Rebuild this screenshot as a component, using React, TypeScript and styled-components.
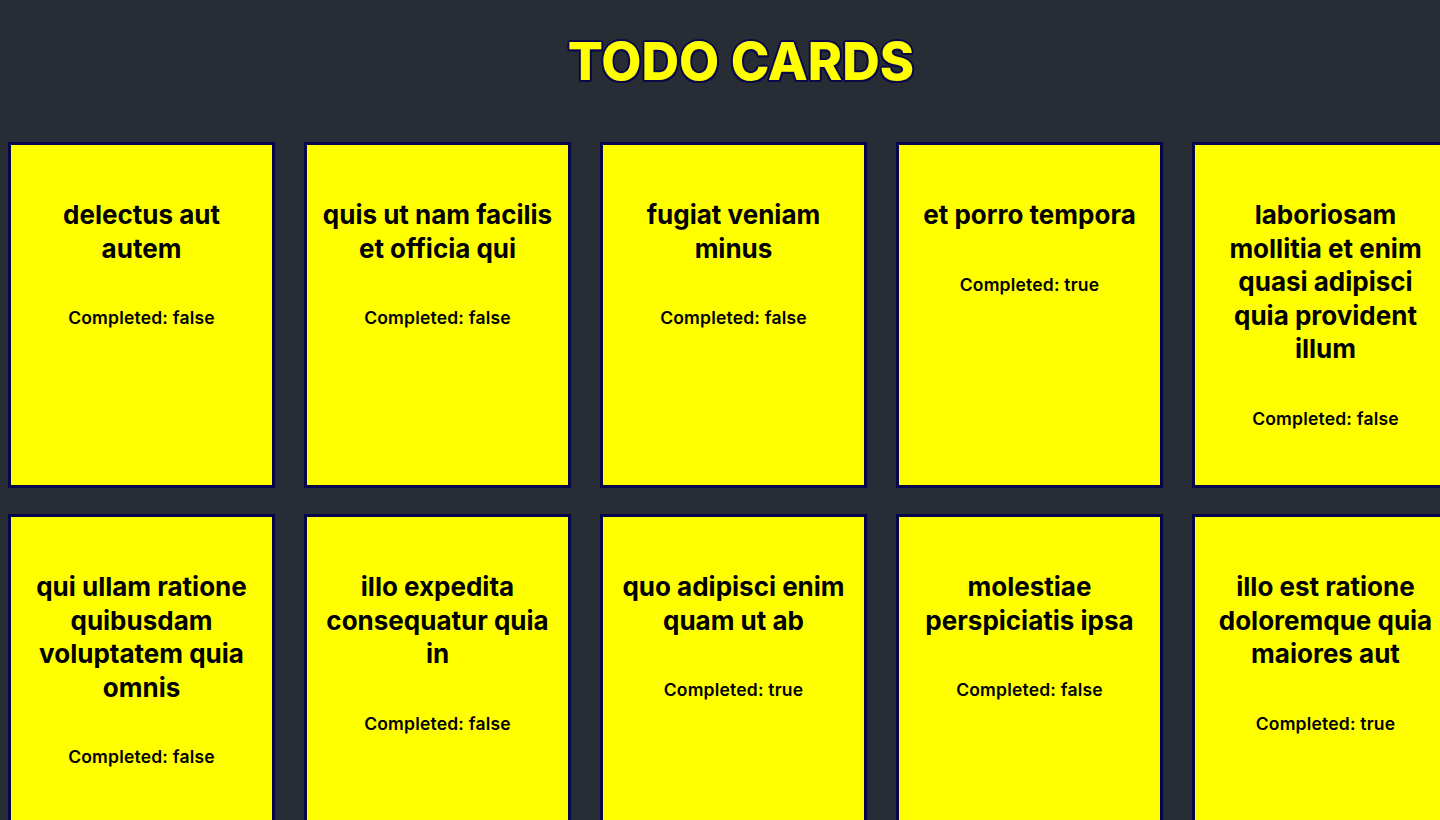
import React from "react";
import styled, { createGlobalStyle } from "styled-components";

const GlobalStyle = createGlobalStyle`
  html, body {
    margin: 0;
    padding: 0;
    background: #282c34;
    overflow-x: hidden;
  }
  body {
    margin: 0;
    padding: 0 8px;
    font-family: Inter, "Noto Sans", sans-serif;
  }
`;

const Page = styled.div`
  width: 1466px;
  display: flex;
  flex-direction: column;
  align-items: stretch;
`;

const Title = styled.h1`
  margin: 30px 0 49px;
  text-align: center;
  font-family: Inter, sans-serif;
  font-weight: 800;
  font-size: 52px;
  line-height: 63px;
  color: #ffff00;
  text-shadow: 2px 0 0 #0a0a4a, -2px 0 0 #0a0a4a, 0 2px 0 #0a0a4a, 0 -2px 0 #0a0a4a,
    1.5px 1.5px 0 #0a0a4a, -1.5px -1.5px 0 #0a0a4a, 1.5px -1.5px 0 #0a0a4a, -1.5px 1.5px 0 #0a0a4a;
`;

const Grid = styled.div`
  display: grid;
  grid-template-columns: repeat(5, 267px);
  column-gap: 29px;
  row-gap: 26px;
`;

const Card = styled.div`
  box-sizing: border-box;
  height: 346px;
  background: #ffff00;
  border: 3px solid #06064a;
  display: flex;
  flex-direction: column;
  align-items: center;
  padding: 53px 15px 0;
  text-align: center;
  color: #000;
`;

const CardTitle = styled.h2`
  margin: 0;
  font-family: Inter, sans-serif;
  font-weight: 700;
  font-size: 26px;
  line-height: 33.5px;
`;

const Status = styled.p`
  margin: 42px 0 0;
  font-family: Inter, sans-serif;
  font-weight: 600;
  font-size: 17.5px;
  line-height: 22px;
  letter-spacing: 0.2px;
`;

const todos = [
  { id: 1, title: "delectus aut autem", completed: false },
  { id: 2, title: "quis ut nam facilis et officia qui", completed: false },
  { id: 3, title: "fugiat veniam minus", completed: false },
  { id: 4, title: "et porro tempora", completed: true },
  { id: 5, title: "laboriosam mollitia et enim quasi adipisci quia provident illum", completed: false },
  { id: 6, title: "qui ullam ratione quibusdam voluptatem quia omnis", completed: false },
  { id: 7, title: "illo expedita consequatur quia in", completed: false },
  { id: 8, title: "quo adipisci enim quam ut ab", completed: true },
  { id: 9, title: "molestiae perspiciatis ipsa", completed: false },
  { id: 10, title: "illo est ratione doloremque quia maiores aut", completed: true },
];

export default function App() {
  return (
    <>
      <GlobalStyle />
      <Page>
        <Title>TODO CARDS</Title>
        <Grid>
          {todos.map((t) => (
            <Card key={t.id}>
              <CardTitle>{t.title}</CardTitle>
              <Status>Completed: {String(t.completed)}</Status>
            </Card>
          ))}
        </Grid>
      </Page>
    </>
  );
}
